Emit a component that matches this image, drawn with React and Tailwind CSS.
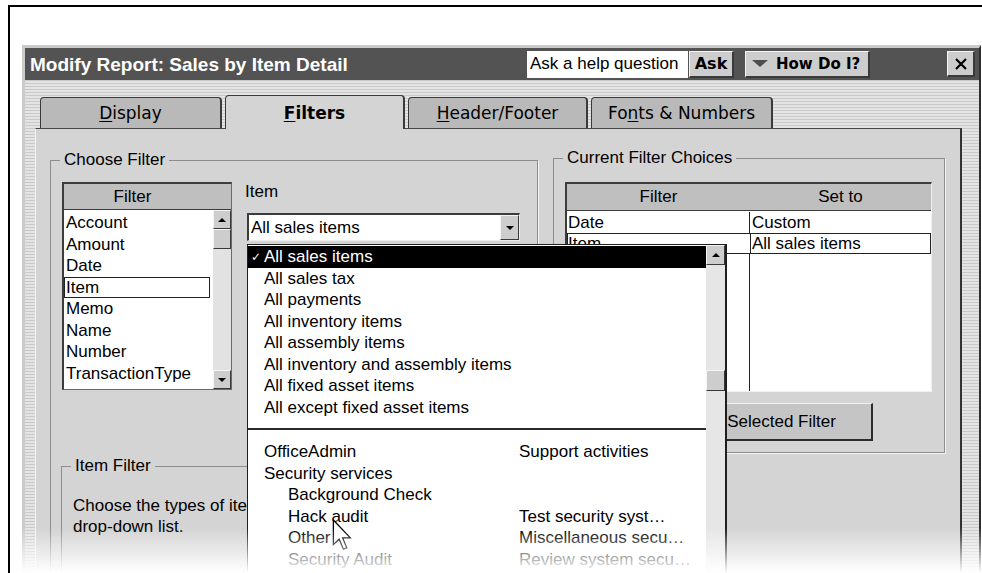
import React from 'react'

const stripes =
  'bg-[repeating-linear-gradient(to_bottom,#e4e4e4_0px,#e4e4e4_2px,#c9c9c9_2px,#c9c9c9_3px)]'
const raised =
  'bg-[#cdcdcd] border-t border-l border-[#f4f4f4] border-r border-b border-r-[#3a3a3a] border-b-[#3a3a3a]'

function UpArrow() {
  return <div className="w-0 h-0 border-l-[4px] border-r-[4px] border-b-[4px] border-l-transparent border-r-transparent border-b-black" />
}

function DownArrow() {
  return <div className="w-0 h-0 border-l-[4px] border-r-[4px] border-t-[4px] border-l-transparent border-r-transparent border-t-black" />
}

function TitleBar() {
  return (
    <div className="h-[32px] bg-[#535353] flex items-center">
      <div className="w-[502px] pl-[5px] text-white font-bold text-[19px] leading-none whitespace-nowrap">
        Modify Report: Sales by Item Detail
      </div>
      <div className="w-[161px] h-[27px] bg-white flex items-center pl-[3px] whitespace-nowrap">
        Ask a help question
      </div>
      <div className={`ml-px w-[45px] h-[27px] flex items-center justify-center font-['DejaVu_Sans',sans-serif] font-bold text-[16px] ${raised} border-r-2 border-b-2`}>
        Ask
      </div>
      <div className={`ml-[11px] w-[125px] h-[27px] flex items-center gap-[8px] pl-[6px] font-['DejaVu_Sans',sans-serif] font-bold text-[15px] ${raised} border-r-2 border-b-2`}>
        <div className="w-0 h-0 border-l-[8px] border-r-[8px] border-t-[7px] border-l-transparent border-r-transparent border-t-[#4d4d4d]" />
        How Do I?
      </div>
      <div className={`ml-auto mr-[4px] w-[28px] h-[26px] flex items-center justify-center ${raised} border-r-2 border-b-2`}>
        <svg width="12" height="12" viewBox="0 0 12 12">
          <path d="M1 1 L11 11 M11 1 L1 11" stroke="#000" strokeWidth="2.2" />
        </svg>
      </div>
    </div>
  )
}

function Tab({ label, active, width }) {
  const base = `${width} rounded-t-[4px] border-t border-l border-[#3a3a3a] border-r-2 flex items-center justify-center font-['DejaVu_Sans',sans-serif] text-[17px]`
  return active ? (
    <div className={`${base} h-[34px] -mb-px relative z-10 bg-[#d4d4d4] font-bold`}>{label}</div>
  ) : (
    <div className={`${base} h-[31px] bg-[#b9b9b9]`}>{label}</div>
  )
}

function FilterList() {
  const rows = ['Account', 'Amount', 'Date', 'Item', 'Memo', 'Name', 'Number', 'TransactionType']
  return (
    <div className="w-[170px] h-[208px] flex flex-col border-t-2 border-l-2 border-[#3c3c3c] border-r border-b border-r-[#6a6a6a] border-b-[#6a6a6a]">
      <div className="h-[26px] bg-[#bfbfbf] border-b border-b-[#3c3c3c] flex items-center justify-center pr-[30px]">Filter</div>
      <div className="flex-1 flex min-h-0">
        <div className="flex-1 bg-white pt-[2px]">
          {rows.map((r) =>
            r === 'Item' ? (
              <div key={r} className="h-[21.5px] leading-[19.5px] pl-px mr-[3px] border border-[#222]">{r}</div>
            ) : (
              <div key={r} className="h-[21.5px] leading-[21.5px] pl-[2px]">{r}</div>
            )
          )}
        </div>
        <div className="w-[18px] bg-[#e2e2e2] flex flex-col">
          <div className={`h-[19px] ${raised} flex items-center justify-center`}><UpArrow /></div>
          <div className={`h-[20px] ${raised}`} />
          <div className="flex-1" />
          <div className={`h-[19px] ${raised} flex items-center justify-center`}><DownArrow /></div>
        </div>
      </div>
    </div>
  )
}

function ItemCombo() {
  return (
    <div className="mt-[11px] ml-[2px] w-[273px] h-[28px] bg-white flex items-stretch border-t-2 border-l-2 border-[#3c3c3c] border-r border-b border-r-[#ececec] border-b-[#ececec]">
      <div className="flex-1 pl-[2px] flex items-center">All sales items</div>
      <div className={`w-[19px] ${raised} flex items-center justify-center`}><DownArrow /></div>
    </div>
  )
}

function CurrentChoices() {
  return (
    <div className="w-[367px] h-[210px] flex flex-col border-t-2 border-l-2 border-[#3c3c3c] border-r border-b border-r-[#f0f0f0] border-b-[#f0f0f0]">
      <div className="h-[27px] bg-[#bfbfbf] border-b border-b-[#3c3c3c] grid grid-cols-[183px_1fr] items-center text-center">
        <div>Filter</div>
        <div>Set to</div>
      </div>
      <div className="flex-1 bg-white flex flex-col pt-[1px]">
        <div className="grid grid-cols-[183px_1fr] h-[21px] leading-[21px]">
          <div className="pl-px border-r border-[#222]">Date</div>
          <div className="pl-[2px]">Custom</div>
        </div>
        <div className="grid grid-cols-[183px_1fr] h-[21px] leading-[19px] border border-[#222]">
          <div className="border-r border-[#222]">Item</div>
          <div className="pl-[1px]">All sales items</div>
        </div>
        <div className="grid grid-cols-[183px_1fr] flex-1">
          <div className="border-r border-[#222]" />
          <div />
        </div>
      </div>
    </div>
  )
}

function ItemDropdown() {
  const top = [
    'All sales tax',
    'All payments',
    'All inventory items',
    'All assembly items',
    'All inventory and assembly items',
    'All fixed asset items',
    'All except fixed asset items',
  ]
  const items = [
    { name: 'OfficeAdmin', desc: 'Support activities' },
    { name: 'Security services', desc: '' },
    { name: 'Background Check', desc: '', sub: true },
    { name: 'Hack audit', desc: 'Test security syst…', sub: true },
    { name: 'Other', desc: 'Miscellaneous secu…', sub: true },
    { name: 'Security Audit', desc: 'Review system secu…', sub: true },
  ]
  return (
    <div className="absolute left-[247px] top-[244px] w-[480px] h-[340px] bg-white flex border-t border-l border-[#1e1e1e] border-r-2 border-r-[#1e1e1e]">
      <div className="w-[458px] pt-[1px]">
        <div className="h-[21.5px] bg-black text-white flex items-center pl-[3px]">
          <span className="w-[13px] text-[12px] leading-none font-['DejaVu_Sans',sans-serif]">✓</span>
          All sales items
        </div>
        {top.map((t) => (
          <div key={t} className="h-[21.5px] leading-[21.5px] pl-[16px]">{t}</div>
        ))}
        <div className="mt-[10px] h-[2px] bg-[#2a2a2a]" />
        <div className="mt-[11px]">
          {items.map((it) => (
            <div key={it.name} className="grid grid-cols-[271px_1fr] h-[21.5px] leading-[21.5px] whitespace-nowrap">
              <div className={it.sub ? 'pl-[40px]' : 'pl-[16px]'}>{it.name}</div>
              <div>{it.desc}</div>
            </div>
          ))}
        </div>
      </div>
      <div className="w-[19px] bg-[#e6e6e6] flex flex-col">
        <div className={`h-[20px] ${raised} flex items-center justify-center`}><UpArrow /></div>
        <div className="h-[105px]" />
        <div className={`h-[21px] ${raised}`} />
      </div>
    </div>
  )
}

function Pointer() {
  return (
    <svg className="absolute left-[332px] top-[519px]" width="20" height="32" viewBox="0 0 12 20">
      <path
        d="M0.6 0.6 L0.6 16 L4.2 12.6 L6.9 18.9 L9 18 L6.4 11.8 L11.2 11.8 Z"
        fill="#fff"
        stroke="#000"
        strokeWidth="0.8"
        strokeLinejoin="miter"
      />
    </svg>
  )
}

function ReportDialog() {
  return (
    <div className={`w-[959px] h-[600px] flex flex-col border-t-[3px] border-l-[3px] border-[#cbcbcb] border-r-2 border-r-[#2e2e2e] ${stripes}`}>
      <TitleBar />
      <div className="flex-1 flex flex-col pl-[10px] pr-[17px] pt-[15px]">
        <div className="h-[33px] flex items-end gap-[3px] pl-[5px]">
          <Tab width="w-[182px]" label={<><span className="underline underline-offset-2">D</span>isplay</>} />
          <Tab width="w-[180px]" active label={<><span className="underline underline-offset-2">F</span>ilters</>} />
          <Tab width="w-[180px]" label={<><span className="underline underline-offset-2">H</span>eader/Footer</>} />
          <Tab width="w-[182px]" label={<>Fo<span className="underline underline-offset-2">n</span>ts &amp; Numbers</>} />
        </div>

        <div className="flex-1 flex items-start bg-[#d4d4d4] pl-[14px] border-t border-l border-r-2 border-t-[#454545] border-l-[#f2f2f2] border-r-[#333]">
          {/* left group: filter picker */}
          <fieldset className="mt-[21px] w-[488px] h-[440px] border border-[#8d8d8d] shadow-[1px_1px_0_#f4f4f4]">
            <legend className="ml-[9px] px-[4px] leading-[20px]">Choose Filter</legend>
            <div className="pl-[11px] pt-[12px]">
              <div className="flex gap-[13px]">
                <FilterList />
                <div>
                  <div className="leading-[20px]">Item</div>
                  <ItemCombo />
                </div>
              </div>
              <fieldset className="mt-[66px] -ml-px w-[466px] h-[140px] border border-[#8d8d8d] shadow-[1px_1px_0_#f4f4f4]">
                <legend className="ml-[9px] px-[4px] leading-[20px]">Item Filter</legend>
                <div className="pl-[11px] pt-[19px] leading-[21px] whitespace-nowrap">
                  <div>Choose the types of items to include from the</div>
                  <div>drop-down list.</div>
                </div>
              </fieldset>
            </div>
          </fieldset>

          {/* right group: active filters */}
          <fieldset className="ml-[15px] mt-[19px] w-[392px] pb-[11px] border border-[#8d8d8d] shadow-[1px_1px_0_#f4f4f4]">
            <legend className="ml-[9px] px-[4px] leading-[20px]">Current Filter Choices</legend>
            <div className="pl-[11px] pt-[14px]">
              <CurrentChoices />
              <div className="mt-[11px] ml-[72px] w-[236px] h-[38px] pr-[14px] flex items-center justify-center bg-[#c5c5c5] border-t border-l border-[#f2f2f2] border-r-2 border-b-2 border-r-[#2c2c2c] border-b-[#2c2c2c]">
                Remove Selected Filter
              </div>
            </div>
          </fieldset>
        </div>
      </div>
    </div>
  )
}

export default function App() {
  return (
    <div className="relative w-[982px] h-[573px] overflow-hidden bg-white text-black text-[17px] leading-[20px] font-['Liberation_Sans',Arial,sans-serif]">
      <div className="h-full pt-[5px] pl-[8px]">
        <div className="h-full pt-[38px] pl-[12px] border-t-2 border-l-2 border-black">
          <ReportDialog />
        </div>
      </div>
      <ItemDropdown />
      <Pointer />
      <div className="absolute left-[10px] right-0 bottom-0 h-[45px] bg-linear-to-b from-white/0 to-white" />
    </div>
  )
}
